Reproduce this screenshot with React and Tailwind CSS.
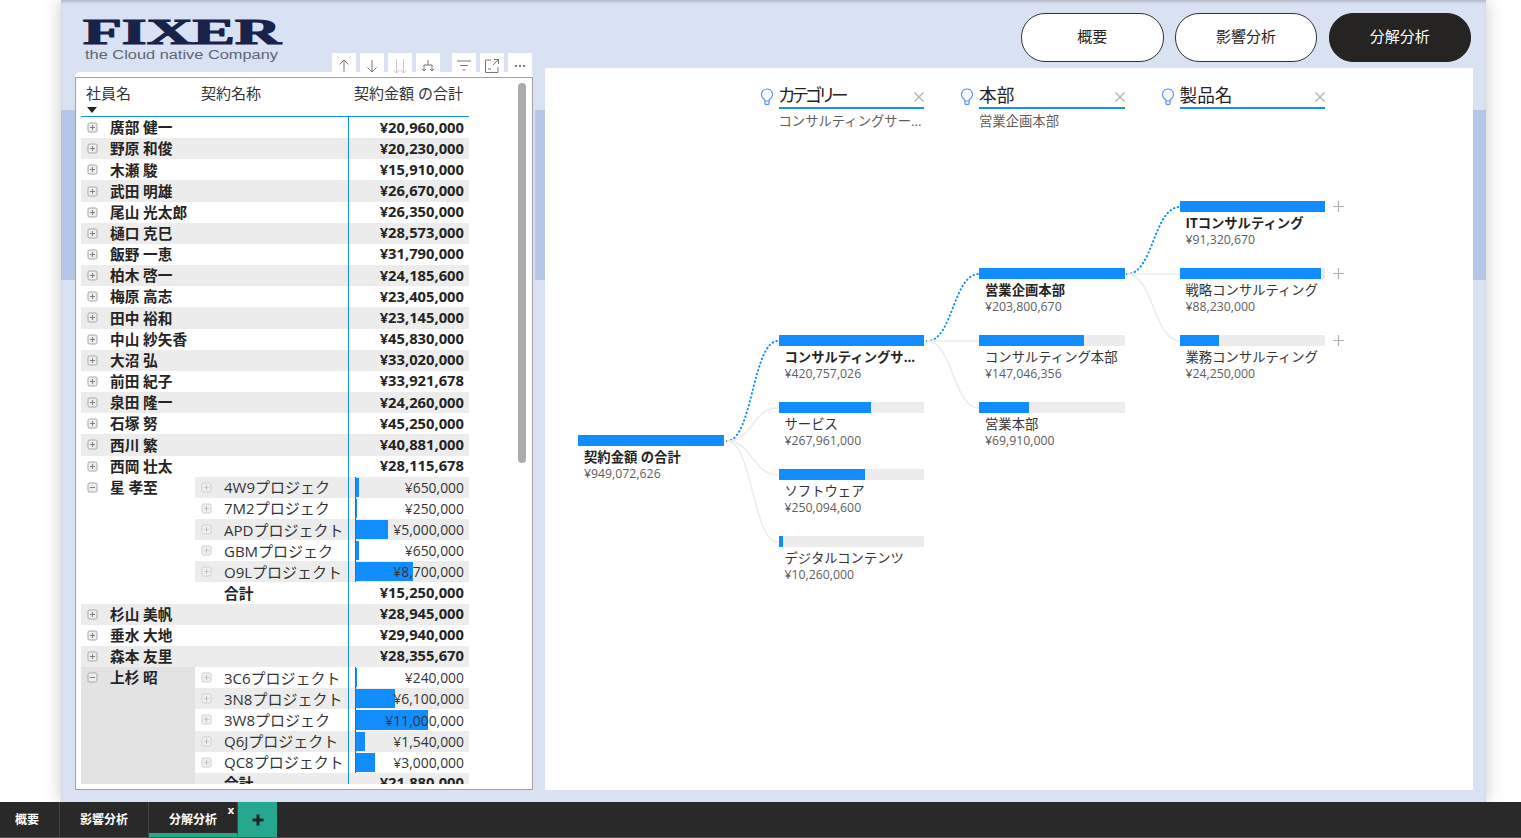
import React from "react";

const BLUE = "#118dff";

const topRows = [
  ["廣部 健一", "¥20,960,000"],
  ["野原 和俊", "¥20,230,000"],
  ["木瀬 駿", "¥15,910,000"],
  ["武田 明雄", "¥26,670,000"],
  ["尾山 光太郎", "¥26,350,000"],
  ["樋口 克巳", "¥28,573,000"],
  ["飯野 一恵", "¥31,790,000"],
  ["柏木 啓一", "¥24,185,600"],
  ["梅原 高志", "¥23,405,000"],
  ["田中 裕和", "¥23,145,000"],
  ["中山 紗矢香", "¥45,830,000"],
  ["大沼 弘", "¥33,020,000"],
  ["前田 紀子", "¥33,921,678"],
  ["泉田 隆一", "¥24,260,000"],
  ["石塚 努", "¥45,250,000"],
  ["西川 繁", "¥40,881,000"],
  ["西岡 壮太", "¥28,115,678"],
];

const hoshi = [
  ["4W9プロジェク", "¥650,000", 4],
  ["7M2プロジェク", "¥250,000", 1.6],
  ["APDプロジェクト", "¥5,000,000", 33],
  ["GBMプロジェク", "¥650,000", 4],
  ["O9Lプロジェクト", "¥8,700,000", 57.5],
];

const uesugi = [
  ["3C6プロジェクト", "¥240,000", 1.5],
  ["3N8プロジェクト", "¥6,100,000", 40],
  ["3W8プロジェク", "¥11,000,000", 72.5],
  ["Q6Jプロジェクト", "¥1,540,000", 10],
  ["QC8プロジェクト", "¥3,000,000", 20],
];

const middleRows = [
  ["杉山 美帆", "¥28,945,000"],
  ["垂水 大地", "¥29,940,000"],
  ["森本 友里", "¥28,355,670"],
];

// connector lines of the tree, in panel coordinates
const links = [
  [182, 373, 233, 273, true],
  [182, 373, 233, 340],
  [182, 373, 233, 407],
  [182, 373, 233, 474],
  [382, 273, 434, 206, true],
  [382, 273, 434, 273],
  [382, 273, 434, 340],
  [582, 206, 635, 139, true],
  [582, 206, 635, 206],
  [582, 206, 635, 273],
];

function linkPath([x0, y0, x1, y1]) {
  const mid = (x0 + x1) / 2;
  return `M${x0} ${y0} C${mid} ${y0} ${mid} ${y1} ${x1} ${y1}`;
}

function Expander({ open, light }) {
  return (
    <svg width="11" height="11" viewBox="0 0 11 11" className="shrink-0">
      <rect x="1" y="1" width="9" height="9" rx="1.5" fill={light ? "#f0f0f0" : "#eeeeee"} stroke={light ? "#cfcfcf" : "#a6a6a6"} />
      <path d="M3 5.5h5" stroke={light ? "#cccccc" : "#808080"} />
      {!open && <path d="M5.5 3v5" stroke={light ? "#bbbbbb" : "#808080"} />}
    </svg>
  );
}

function TopRow({ name, value, grey }) {
  return (
    <div className={`flex h-[21.17px] items-center ${grey ? "bg-[#ececec]" : ""}`}>
      <div className="flex w-[267px] items-center pl-[6px] text-[14.67px] font-bold">
        <Expander />
        <span className="ml-[12px] leading-none">{name}</span>
      </div>
      <div className="flex h-full flex-1 items-center justify-end border-l border-[#118dff] pb-[2px] pr-[5px] text-[14.75px] font-bold">
        {value}
      </div>
    </div>
  );
}

function ChildRow({ name, value, bar, grey }) {
  return (
    <div className={`flex h-[21.17px] items-center ${grey ? "bg-[#ececec]" : ""}`}>
      <div className="flex w-[153px] items-center pl-[6px] text-[15px] text-[#333333]">
        <Expander light />
        <span className="ml-[12px] whitespace-nowrap pt-[1px] leading-none">{name}</span>
      </div>
      <div className="relative flex h-full flex-1 items-center justify-end border-l border-[#118dff] pr-[5px] pt-[2px] text-[13.9px] text-[#333333]">
        <div className="absolute bottom-[1px] left-[6px] top-[1px] bg-[#118dff]" style={{ width: bar }} />
        <div className="absolute bottom-0 left-[6px] top-0 border-l border-dotted border-[#555555]" />
        <span className="relative">{value}</span>
      </div>
    </div>
  );
}

function TotalRow({ value, grey }) {
  return (
    <div className={`flex h-[21.17px] items-center ${grey ? "bg-[#ececec]" : ""}`}>
      <div className="w-[153px] pl-[29px] text-[14.67px] font-bold leading-none">合計</div>
      <div className="flex h-full flex-1 items-center justify-end border-l border-[#118dff] pb-[2px] pr-[5px] text-[14.75px] font-bold">
        {value}
      </div>
    </div>
  );
}

function Group({ name, rows, total, shaded, firstGrey }) {
  return (
    <div className="flex">
      <div className={`flex w-[114px] items-start pl-[6px] pt-[5px] text-[14.67px] font-bold ${shaded ? "bg-[#e3e3e3]" : ""}`}>
        <Expander open />
        <span className="ml-[12px] leading-[11px]">{name}</span>
      </div>
      <div className="flex-1">
        {rows.map((r, i) => (
          <ChildRow key={r[0]} name={r[0]} value={r[1]} bar={r[2]} grey={i % 2 === (firstGrey ? 0 : 1)} />
        ))}
        <TotalRow value={total} grey={!firstGrey} />
      </div>
    </div>
  );
}

function ToolIcon({ children, stroke = "#777777" }) {
  return (
    <div className="flex h-[24px] w-[24px] items-center justify-center bg-white pt-[1px]">
      <svg width="16" height="16" viewBox="0 0 16 16" fill="none" stroke={stroke} strokeWidth="1">
        {children}
      </svg>
    </div>
  );
}

function Toolbar() {
  return (
    <div className="relative z-10 -mb-[5px] mr-[3px] flex justify-end gap-[4px]">
      <ToolIcon>
        <path d="M8 2v12M3.5 6.5 8 2l4.5 4.5" />
      </ToolIcon>
      <ToolIcon>
        <path d="M8 2v12M3.5 9.5 8 14l4.5-4.5" />
      </ToolIcon>
      <ToolIcon stroke="#c8c8c8">
        <path d="M4.5 1v14M1.5 12l3 3 3-3M11.5 1v14M8.5 12l3 3 3-3" />
      </ToolIcon>
      <ToolIcon>
        <path d="M8 2v5M4 13V7h8v6M2 11l2 2 2-2M10 11l2 2 2-2" />
      </ToolIcon>
      <div className="ml-[8px]">
        <ToolIcon>
          <path d="M1 3h14M4 7.5h8M6.5 12h3" />
        </ToolIcon>
      </div>
      <ToolIcon>
        <path d="M7 2H1.5v12.5H14V9M9 7l5.5-5.5M10 1.5h4.5V6M4 11h3" />
      </ToolIcon>
      <ToolIcon>
        <g fill="#777777" stroke="none">
          <rect x="3" y="7" width="2" height="2" />
          <rect x="7" y="7" width="2" height="2" />
          <rect x="11" y="7" width="2" height="2" />
        </g>
      </ToolIcon>
    </div>
  );
}

function Logo() {
  return (
    <svg width="210" height="53" viewBox="0 0 210 53" className="ml-[7px] overflow-visible">
      <text
        x="1"
        y="44"
        textLength="198"
        lengthAdjust="spacingAndGlyphs"
        fontFamily="'Liberation Serif', serif"
        fontWeight="700"
        fontSize="36"
        fill="#18234a"
        stroke="#18234a"
        strokeWidth="1.2"
      >
        FIXER
      </text>
      <text
        x="3"
        y="59"
        textLength="193"
        lengthAdjust="spacingAndGlyphs"
        fontFamily="'Liberation Sans', sans-serif"
        fontSize="12.5"
        fill="#5d6678"
      >
        the Cloud native Company
      </text>
    </svg>
  );
}

function Node({ title, value, width, bold, plus }) {
  return (
    <div className="relative h-[67px]">
      <div className="h-[11px] bg-[#ececec]">
        <div className="h-full bg-[#118dff]" style={{ width }} />
      </div>
      {plus && (
        <svg width="11" height="11" viewBox="0 0 11 11" className="absolute -right-[19px] top-0" stroke="#b3b0ad" strokeWidth="1.2">
          <path d="M5.5 0v11M0 5.5h11" />
        </svg>
      )}
      <div className={`mt-[1px] truncate pl-[6px] text-[13.33px] leading-[20px] ${bold ? "font-bold text-[#252423]" : "text-[#333333]"}`}>
        {title}
      </div>
      <div className="-mt-[2px] pl-[6px] text-[12.3px] leading-[17px] text-[#605e5c]">{value}</div>
    </div>
  );
}

function LevelHeader({ title, sub, narrow, className }) {
  return (
    <div className={`h-[133px] pt-[13px] ${className}`}>
      <div className="-ml-[19px] flex">
        <svg width="19" height="26" viewBox="0 0 19 26" fill="none" stroke="#5b8dff" strokeWidth="1.2" className="shrink-0">
          <path d="M7 8a5.4 5.4 0 0 0-3.3 9.7c.8.7 1.3 1.4 1.3 2.3h4c0-.9.5-1.6 1.3-2.3A5.4 5.4 0 0 0 7 8z" />
          <path d="M5 20v2.4a1 1 0 0 0 1 1h2a1 1 0 0 0 1-1V20" />
        </svg>
        <div className="flex h-[28px] flex-1 items-center justify-between border-b-2 border-[#118dff]">
          <span
            className={`pt-[3px] text-[17.67px] leading-none text-[#252423] ${
              narrow ? "tracking-[-2.7px] [font-feature-settings:'palt']" : ""
            }`}
          >
            {title}
          </span>
          <svg width="10" height="10" viewBox="0 0 10 10" stroke="#b3b0ad" strokeWidth="1.3" className="mt-[6px]">
            <path d="M0.5 0.5l9 9M9.5 0.5l-9 9" />
          </svg>
        </div>
      </div>
      {sub && <div className="mt-[3px] whitespace-nowrap text-[13.33px] leading-[18px] text-[#605e5c]">{sub}</div>}
    </div>
  );
}

function PillButton({ label, active }) {
  return (
    <div
      className={`flex h-[49px] w-[142.5px] items-center justify-center rounded-[24px] border pb-[3px] text-[15px] ${
        active ? "border-[#252423] bg-[#252423] text-white" : "border-[#333333] bg-white text-[#252423]"
      }`}
    >
      {label}
    </div>
  );
}

function TableVisual() {
  return (
    <div className="relative h-[713px] w-[458px] overflow-hidden border border-[#a0a0a0] bg-white pb-[6px] pl-[5px]">
      <div className="w-[388px]">
        <div className="relative h-[39px] border-b border-[#118dff] text-[15px] leading-[20px] text-[#333333]">
          <span className="absolute left-[5px] top-[5px]">社員名</span>
          <span className="absolute left-[120px] top-[5px]">契約名称</span>
          <span className="absolute right-[6px] top-[5px]">契約金額 の合計</span>
          <svg width="10" height="6" viewBox="0 0 10 6" className="absolute left-[6px] top-[29px]">
            <path d="M0 0h10L5 6z" fill="#252423" />
          </svg>
        </div>
        <div className="h-[667px] overflow-hidden text-[#252423]">
          {topRows.map((r, i) => (
            <TopRow key={r[0]} name={r[0]} value={r[1]} grey={i % 2 === 1} />
          ))}
          <Group name="星 孝至" rows={hoshi} total="¥15,250,000" firstGrey />
          {middleRows.map((r, i) => (
            <TopRow key={r[0]} name={r[0]} value={r[1]} grey={i % 2 === 0} />
          ))}
          <Group name="上杉 昭" rows={uesugi} total="¥21,880,000" shaded />
        </div>
      </div>
      {/* scrollbar */}
      <div className="absolute left-[442px] top-[5px] h-[380px] w-[8px] rounded-full bg-[#ababab]" />
    </div>
  );
}

function TreePanel() {
  return (
    <div className="relative h-[722px] bg-white pl-[33px]">
      <svg width="928" height="722" viewBox="0 0 928 722" fill="none" className="absolute left-0 top-0">
        {links.map((l, i) => (
          <path
            key={i}
            d={linkPath(l)}
            stroke={l[4] ? BLUE : "#ececec"}
            strokeWidth={l[4] ? 2 : 1.5}
            strokeLinecap={l[4] ? "round" : "butt"}
            strokeDasharray={l[4] ? "0.5 3.5" : undefined}
          />
        ))}
      </svg>
      <div className="relative flex gap-[55px]">
        <div className="w-[145.5px] pt-[367px]">
          <Node title="契約金額 の合計" value="¥949,072,626" width="100%" bold />
        </div>
        <div className="w-[145.5px]">
          <LevelHeader title="カテゴリー" sub="コンサルティングサー..." narrow className="mb-[134px]" />
          <Node title="コンサルティングサ..." value="¥420,757,026" width="100%" bold />
          <Node title="サービス" value="¥267,961,000" width={92} />
          <Node title="ソフトウェア" value="¥250,094,600" width={86} />
          <Node title="デジタルコンテンツ" value="¥10,260,000" width={4} />
        </div>
        <div className="w-[145.5px]">
          <LevelHeader title="本部" sub="営業企画本部" className="mb-[67px]" />
          <Node title="営業企画本部" value="¥203,800,670" width="100%" bold />
          <Node title="コンサルティング本部" value="¥147,046,356" width={105} />
          <Node title="営業本部" value="¥69,910,000" width={50} />
        </div>
        <div className="w-[145.5px]">
          <LevelHeader title="製品名" />
          <Node title="ITコンサルティング" value="¥91,320,670" width="100%" bold plus />
          <Node title="戦略コンサルティング" value="¥88,230,000" width={141} plus />
          <Node title="業務コンサルティング" value="¥24,250,000" width={39} plus />
        </div>
      </div>
    </div>
  );
}

function TabBar() {
  return (
    <div className="flex h-[36px] border-b border-[#555555] bg-[#292929] text-[12px] font-semibold text-white">
      <div className="flex w-[60px] items-center border-r border-[#444444] pl-[15px]">概要</div>
      <div className="flex w-[89px] items-center justify-center border-r border-[#444444]">影響分析</div>
      <div className="relative flex w-[89px] items-center justify-center border-b-4 border-r border-[#26a88f] border-r-[#444444] pt-[4px]">
        分解分析
        <span className="absolute right-[3px] top-[1px] text-[11px] font-bold leading-[14px]">x</span>
      </div>
      <div className="flex w-[39px] items-center justify-center bg-[#26a88f]">
        <svg width="12" height="12" viewBox="0 0 12 12" stroke="#222222" strokeWidth="3">
          <path d="M6 0.5v11M0.5 6h11" />
        </svg>
      </div>
    </div>
  );
}

export default function App() {
  return (
    <div className="flex h-[838px] w-full flex-col overflow-hidden bg-white font-['Open_Sans','Noto_Sans_CJK_JP',sans-serif]">
      <div className="ml-[61px] h-[802px] w-[1425px] bg-[linear-gradient(to_bottom,#d9e2f3_110px,#b4c7e7_110px,#b4c7e7_280px,#d9e2f3_280px)] pl-[14px] pr-[13px] shadow-[0_0_16px_rgba(0,0,0,0.22),inset_0_3px_3px_-1px_rgba(0,0,0,0.18)]">
        <div className="flex gap-[10px]">
          <div className="w-[460px]">
            <div className="h-[53px]">
              <Logo />
            </div>
            <Toolbar />
            <div className="h-[5px] w-[458px] rounded-t-[12px] bg-white" />
            <div className="bg-[#dae3f3]">
              <TableVisual />
            </div>
          </div>
          <div className="w-[928px]">
            <div className="flex h-[68px] justify-end gap-[11.2px] pr-[2px] pt-[13px]">
              <PillButton label="概要" />
              <PillButton label="影響分析" />
              <PillButton label="分解分析" active />
            </div>
            <TreePanel />
          </div>
        </div>
      </div>
      <TabBar />
    </div>
  );
}
